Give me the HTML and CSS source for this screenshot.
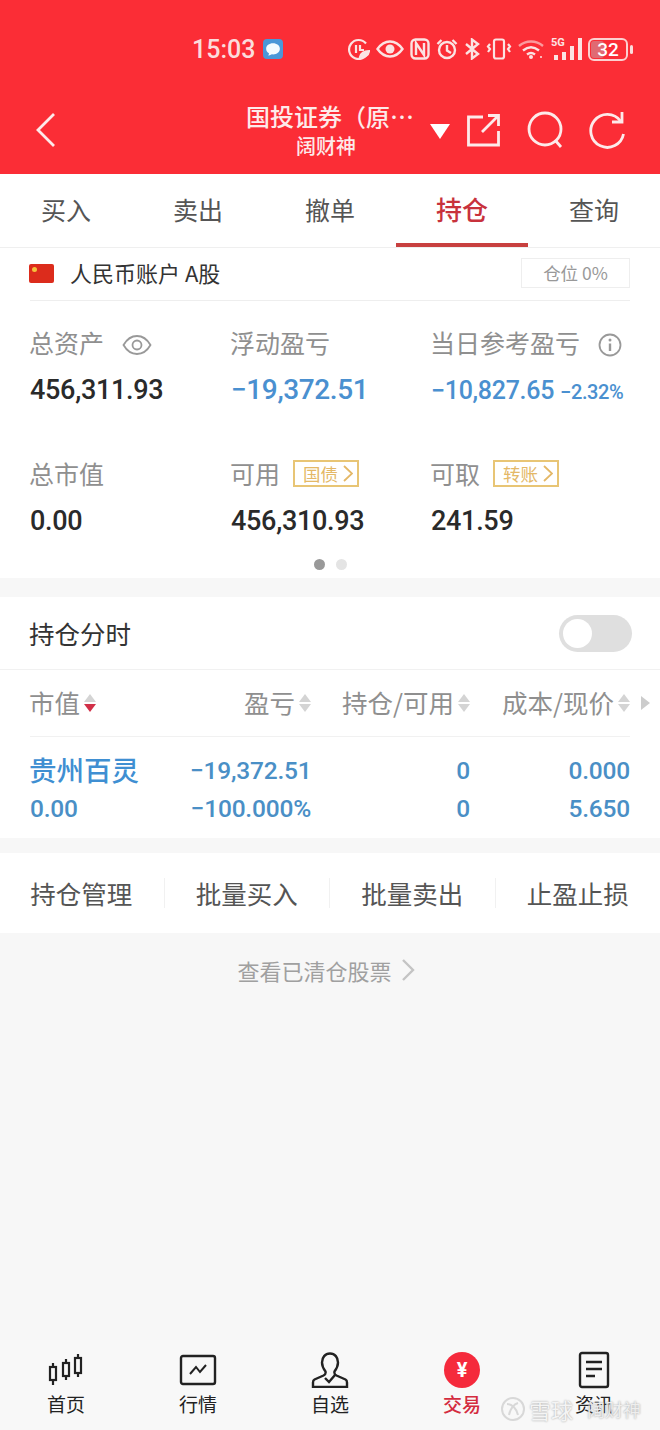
FILE: index.html
```html
<!doctype html>
<html>

<head>
  <meta charset="UTF-8" />
  <meta name="viewport" content="width=device-width, initial-scale=1.0" />
  <title>持仓</title>
  <link rel="stylesheet" href="styles.css">
</head>

<body>
  <div class="app">
    <header class="top">
      <div class="status">
        <span class="clock">15:03</span>
        <span class="msg"><svg width="16" height="15" viewBox="0 0 14 13"><path d="M7 1C3.600 1 1 3 1 5.800c0 1.700 1 3.100 2.500 4L3 12l3-1.300c.3 0 .7.100 1 .100 3.400 0 6-2.200 6-5S10.400 1 7 1z" fill="#f4fbff"/></svg></span>
        <span class="status-icons">
          <svg width="22" height="22" viewBox="0 0 22 22" fill="none" stroke="#fbe3e3" stroke-width="2.200"><path d="M18 5.500A9.500 9.500 0 1 0 20 13"/><path d="M8 7v8M12 7v5h4"/><path d="M12 19c1-4 4-6 9-6-.5 4-4 6-9 6z" fill="#fbe3e3"/></svg>
          <svg width="28" height="20" viewBox="0 0 28 20" fill="none" stroke="#fbe3e3" stroke-width="2.400"><path d="M1.500 10C5 5 9 2.500 14 2.500S23 5 26.500 10C23 15 19 17.500 14 17.500S5 15 1.500 10z"/><circle cx="14" cy="10" r="4.500" fill="#fbe3e3" stroke="none"/></svg>
          <svg width="20" height="22" viewBox="0 0 20 22" fill="none" stroke="#fbe3e3" stroke-width="2.400"><rect x="1.500" y="1.500" width="17" height="19" rx="4"/><path d="M6 17V5l8 12V5"/></svg>
          <svg width="22" height="22" viewBox="0 0 22 22" fill="none" stroke="#fbe3e3" stroke-width="2.400"><circle cx="11" cy="12" r="8"/><path d="M11 7v5.500l4 2.500M1.500 6l4-4M20.500 6l-4-4"/></svg>
          <svg width="16" height="22" viewBox="0 0 16 22" fill="none" stroke="#fbe3e3" stroke-width="2.400"><path d="M2 6l12 10-6 4.500v-19L14 6 2 16"/></svg>
          <svg width="26" height="22" viewBox="0 0 26 22" fill="none" stroke="#fbe3e3" stroke-width="2.200"><rect x="8" y="1.500" width="10" height="19" rx="2"/><path d="M4 6l-2 2.500L4 11l-2 3M22 6l2 2.500L22 11l2 3"/></svg>
          <svg width="27" height="20" viewBox="0 0 27 20" fill="none" stroke="#fbe3e3" stroke-width="2.400"><path d="M1 7c7-6 17-6 24 0" opacity=".6"/><path d="M5 11.500c5-4 11-4 16 0M9 15.500c2.500-1.800 5.500-1.800 8 0"/><circle cx="13" cy="18" r="2" fill="#fbe3e3" stroke="none"/><circle cx="23" cy="18" r="1" fill="#fbe3e3" stroke="none"/></svg>
          <span class="signal"><b>5G</b><i class="s1"></i><i class="s2"></i><i class="s3"></i><i class="s4"></i></span>
          <span class="battery"><span class="batt-level"></span><span class="batt-num">32</span></span>
        </span>
      </div>
      <div class="nav">
        <svg class="back" width="24" height="36" viewBox="0 0 24 36" fill="none" stroke="#fdeaea" stroke-width="2.800"><path d="M20 2L4 18l16 16"/></svg>
        <div class="title">
          <div class="title-main">国投证券（原…</div>
          <div class="title-sub">阔财神</div>
        </div>
        <span class="caret"></span>
        <svg class="nav-icon share" width="36" height="36" viewBox="0 0 36 36" fill="none" stroke="#fdeaea" stroke-width="2.800"><path d="M18 5H3.500v28h30V19M17 20L33 4M23 3.500h10.500V14" /></svg>
        <svg class="nav-icon search" width="38" height="38" viewBox="0 0 38 38" fill="none" stroke="#fdeaea" stroke-width="2.800"><circle cx="19" cy="18" r="16"/><path d="M29 29l6 7"/></svg>
        <svg class="nav-icon refresh" width="38" height="38" viewBox="0 0 38 38" fill="none" stroke="#fdeaea" stroke-width="2.800"><path d="M33.500 10A16.500 16.500 0 1 0 36.500 23"/><path d="M35 1v10H25"/></svg>
      </div>
    </header>

    <nav class="tabs">
      <div class="tab">买入</div>
      <div class="tab">卖出</div>
      <div class="tab">撤单</div>
      <div class="tab active">持仓</div>
      <div class="tab">查询</div>
    </nav>

    <section class="assets">
      <div class="account">
        <span class="flag"><i></i></span>
        <span class="account-name">人民币账户 A股</span>
        <span class="ratio">仓位 0%</span>
      </div>
      <div class="summary">
        <div class="cell">
          <div class="label">总资产
            <svg class="eye" width="30" height="22" viewBox="0 0 30 22" fill="none" stroke="#999" stroke-width="1.800"><path d="M1.500 11C5 5 9.500 2 15 2s10 3 13.500 9C25 17 20.500 20 15 20S5 17 1.500 11z"/><circle cx="15" cy="11" r="4.500"/></svg>
          </div>
          <div class="value">456,311.93</div>
        </div>
        <div class="cell">
          <div class="label">浮动盈亏</div>
          <div class="value blue">−19,372.51</div>
        </div>
        <div class="cell">
          <div class="label">当日参考盈亏
            <svg class="info" width="24" height="24" viewBox="0 0 24 24" fill="none" stroke="#999" stroke-width="1.800"><circle cx="12" cy="12" r="10.500"/><path d="M12 10.500V18" stroke-width="2.400"/><circle cx="12" cy="7" r="1.500" fill="#999" stroke="none"/></svg>
          </div>
          <div class="value blue day"><span>−10,827.65</span><small>−2.32%</small></div>
        </div>
        <div class="cell">
          <div class="label">总市值</div>
          <div class="value">0.00</div>
        </div>
        <div class="cell">
          <div class="label">可用 <span class="tag">国债<svg width="10" height="17" viewBox="0 0 10 17" fill="none" stroke="#e4b867" stroke-width="1.800"><path d="M1 1l8 7.500L1 16"/></svg></span></div>
          <div class="value">456,310.93</div>
        </div>
        <div class="cell">
          <div class="label">可取 <span class="tag">转账<svg width="10" height="17" viewBox="0 0 10 17" fill="none" stroke="#e4b867" stroke-width="1.800"><path d="M1 1l8 7.500L1 16"/></svg></span></div>
          <div class="value">241.59</div>
        </div>
      </div>
      <div class="dots"><i class="on"></i><i></i></div>
    </section>

    <section class="holdings">
      <div class="switch-row">
        <span class="switch-label">持仓分时</span>
        <span class="switch"><i></i></span>
      </div>
      <div class="table">
        <div class="thead">
          <div class="th col-1">市值<span class="sort sorted"><i class="up"></i><i class="down"></i></span></div>
          <div class="th col-2">盈亏<span class="sort"><i class="up"></i><i class="down"></i></span></div>
          <div class="th col-3">持仓/可用<span class="sort"><i class="up"></i><i class="down"></i></span></div>
          <div class="th col-4">成本/现价<span class="sort"><i class="up"></i><i class="down"></i></span></div>
        </div>
        <span class="more"></span>
        <div class="trow">
          <div class="td col-1 name">贵州百灵</div>
          <div class="td col-2">−19,372.51</div>
          <div class="td col-3">0</div>
          <div class="td col-4">0.000</div>
        </div>
        <div class="trow second">
          <div class="td col-1">0.00</div>
          <div class="td col-2">−100.000%</div>
          <div class="td col-3">0</div>
          <div class="td col-4">5.650</div>
        </div>
      </div>
    </section>

    <section class="actions">
      <div class="action">持仓管理</div>
      <div class="action">批量买入</div>
      <div class="action">批量卖出</div>
      <div class="action">止盈止损</div>
    </section>

    <div class="cleared">查看已清仓股票
      <svg width="14" height="22" viewBox="0 0 14 22" fill="none" stroke="#c4c4c4" stroke-width="2.400"><path d="M2 1l10 10L2 21"/></svg>
    </div>

    <footer class="bottom">
      <div class="bottom-item">
        <div class="icon-box"><svg width="36" height="32" viewBox="0 0 36 32" fill="none" stroke="#222" stroke-width="2.200"><path d="M5 9v22M18 5v21M30 0v23"/><rect x="2" y="13" width="6" height="13" fill="#f8f8f8"/><rect x="15" y="9" width="6" height="13" fill="#f8f8f8"/><rect x="27" y="4" width="6" height="15" fill="#f8f8f8"/></svg></div>
        <span>首页</span>
      </div>
      <div class="bottom-item">
        <div class="icon-box"><svg width="38" height="32" viewBox="0 0 38 32" fill="none" stroke="#222" stroke-width="2.400"><rect x="2" y="2" width="34" height="28" rx="2"/><path d="M11 20l6-7 4 5 6-7" stroke-width="2"/></svg></div>
        <span>行情</span>
      </div>
      <div class="bottom-item">
        <div class="icon-box"><svg width="38" height="36" viewBox="0 0 38 36" fill="none" stroke="#222" stroke-width="2.400"><path d="M19 1.500c-5 0-8 4-8 9 0 4 2 7 3.500 9 .5 2 0 3-2 4l-9 4c-1 .5-1.500 1.500-1.500 3V35h34v-4.500c0-1.500-.5-2.500-1.500-3l-9-4c-2-1-2.500-2-2-4 1.500-2 3.500-5 3.500-9 0-5-3-9-8-9z"/><path d="M14 26l4 4 6-7"/></svg></div>
        <span>自选</span>
      </div>
      <div class="bottom-item current">
        <div class="icon-box"><span class="yuan">¥</span></div>
        <span>交易</span>
      </div>
      <div class="bottom-item">
        <div class="icon-box"><svg width="32" height="38" viewBox="0 0 32 38" fill="none" stroke="#222" stroke-width="2.400"><rect x="2" y="2" width="28" height="34" rx="2"/><path d="M8 11h16M8 18h16M8 25h9"/></svg></div>
        <span>资讯</span>
      </div>
    </footer>

    <div class="watermark">
      <svg width="26" height="26" viewBox="0 0 26 26" fill="none" stroke="#d8d8d8" stroke-width="2"><circle cx="13" cy="13" r="11"/><path d="M7 8c5 0 10 5 11 11M18 7c-4 1-8 6-9 12"/></svg>
      <span class="wm-a">雪球</span><span class="wm-b">阔财神</span>
    </div>
  </div>
</body>

</html>
```

FILE: styles.css
```css
* {
  box-sizing: border-box;
}

body {
  margin: 0;
  font-family: "Noto Sans CJK SC", "Roboto", sans-serif;
}

.app {
  position: relative;
  width: 660px;
  height: 1430px;
  background-color: #f7f7f7;
  display: flex;
  flex-direction: column;
  overflow: hidden;
}

.top {
  height: 174px;
  background-color: #fb2d36;
  color: #fdeaea;
}

.status {
  height: 88px;
  padding: 10px 0 0 192px;
  display: flex;
  align-items: center;
}

.clock {
  font-family: "Roboto", sans-serif;
  font-size: 25px;
  font-weight: 500;
  color: #fbdcdc;
  width: 71px;
  flex: none;
}

.msg {
  width: 20px;
  height: 20px;
  flex: none;
  border-radius: 4px;
  background-color: #4b97d8;
  display: flex;
  align-items: center;
  justify-content: center;
}

.status-icons {
  margin-left: 65px;
  display: flex;
  align-items: center;
  gap: 6px;
}

.status-icons svg {
  flex: none;
}

.signal {
  position: relative;
  flex: none;
  width: 31px;
  height: 24px;
}

.signal b {
  position: absolute;
  left: 0;
  top: -1px;
  font: bold 11px "Roboto", sans-serif;
  color: #fbe3e3;
}

.signal i {
  position: absolute;
  bottom: 1px;
  width: 4px;
  background-color: #fbe3e3;
}

.s1 { left: 3px; height: 5px; }
.s2 { left: 11px; height: 8px; }
.s3 { left: 19px; height: 14px; }
.s4 { left: 27px; height: 22px; }

.battery {
  position: relative;
  flex: none;
  width: 40px;
  height: 23px;
  border: 2px solid #fbd0d0;
  border-radius: 6px;
}

.battery::after {
  content: "";
  position: absolute;
  right: -7px;
  top: 5px;
  width: 3px;
  height: 9px;
  border-radius: 2px;
  background-color: #fbdcdc;
}

.batt-level {
  position: absolute;
  left: 1px;
  top: 1px;
  bottom: 1px;
  width: 13px;
  border-radius: 3px;
  background-color: #e06a72;
}

.batt-num {
  position: absolute;
  inset: 0;
  text-align: center;
  font: 500 19px/19px "Roboto", sans-serif;
  color: #fff;
}

.nav {
  position: relative;
  height: 86px;
  padding-left: 34px;
  display: flex;
  align-items: center;
}

.back {
  margin-top: -2px;
}

.title {
  width: 186px;
  margin-top: -3px;
  margin-left: 188px;
}

.title-main {
  font-size: 24px;
  font-weight: 500;
  line-height: 31px;
  white-space: nowrap;
}

.title-sub {
  font-size: 20px;
  font-weight: 500;
  line-height: 29px;
  padding-left: 50px;
}

.caret {
  width: 0;
  height: 0;
  margin-left: -2px;
  border-left: 10px solid transparent;
  border-right: 10px solid transparent;
  border-top: 15px solid #fff;
}

.nav-icon {
  flex: none;
  margin-top: -2px;
}

.share {
  margin-left: 15px;
}

.search {
  margin-left: 25px;
}

.refresh {
  margin-left: 23px;
}

.tabs {
  height: 74px;
  display: flex;
  background-color: #fff;
  border-bottom: 1px solid #efefef;
}

.tab {
  width: 132px;
  text-align: center;
  font-size: 25px;
  line-height: 70px;
  color: #555;
}

.tab.active {
  color: #c8323c;
  font-size: 26px;
  font-weight: 500;
  border-bottom: 4px solid #c8403f;
}

.assets {
  height: 330px;
  background-color: #fff;
  padding: 0 30px;
}

.account {
  height: 53px;
  display: flex;
  align-items: center;
  border-bottom: 1px solid #eee;
}

.flag {
  width: 25px;
  height: 19px;
  border-radius: 2px;
  background-color: #dc2c1c;
  padding: 3px 0 0 3px;
  margin: -2px 0 0 -1px;
}

.flag i {
  display: block;
  width: 5px;
  height: 5px;
  background-color: #f5c13b;
  border-radius: 50%;
}

.account-name {
  margin-top: -4px;
  margin-left: 16px;
  font-size: 22px;
  color: #333;
  flex: auto;
}

.ratio {
  width: 109px;
  height: 30px;
  border: 1px solid #eee;
  text-align: center;
  font-size: 17.500px;
  line-height: 28px;
  color: #999;
  margin-top: -2px;
}

.summary {
  display: grid;
  grid-template-columns: 201px 200px 199px;
  grid-template-rows: 131px 100px;
  padding-top: 22px;
}

.label {
  height: 38px;
  margin-left: -1px;
  font-size: 25px;
  line-height: 38px;
  color: #8f8f8f;
  display: flex;
  align-items: center;
  white-space: nowrap;
}

.eye {
  margin-top: 5px;
  margin-left: 18px;
}

.info {
  margin-top: 5px;
  margin-left: 18px;
}

.value {
  margin-top: 11px;
  font-family: "Roboto", sans-serif;
  font-size: 27px;
  font-weight: 500;
  letter-spacing: -.3px;
  line-height: 36px;
  color: #2a2a2a;
  white-space: nowrap;
}

.blue {
  color: #4a90d0;
  font-size: 28px;
  letter-spacing: -.4px;
}

.day span {
  font-size: 25px;
  letter-spacing: -.3px;
}

.day small {
  margin-left: 6px;
  font-size: 20px;
  letter-spacing: -.4px;
}

.tag {
  display: inline-flex;
  align-items: center;
  justify-content: space-between;
  width: 66px;
  height: 27px;
  margin-left: 13px;
  padding: 0 4px 0 8px;
  border: 2px solid #e8c575;
  font-size: 17.500px;
  line-height: 23px;
  color: #e4b867;
}

.dots {
  display: flex;
  justify-content: center;
  gap: 11px;
  margin-top: 5px;
}

.dots i {
  width: 11px;
  height: 11px;
  border-radius: 50%;
  background-color: #e4e4e4;
}

.dots i.on {
  background-color: #999;
}

.holdings {
  height: 241px;
  margin-top: 19px;
  background-color: #fff;
}

.switch-row {
  height: 73px;
  padding: 0 28px 0 29px;
  display: flex;
  align-items: center;
  justify-content: space-between;
  color: #333;
  border-bottom: 1px solid #f1f1f1;
}

.switch-label {
  margin-top: -2px;
  font-size: 25.500px;
}

.switch {
  width: 73px;
  height: 37px;
  border-radius: 19px;
  background-color: #dfdfdf;
  padding: 4px;
}

.switch i {
  display: block;
  width: 29px;
  height: 29px;
  border-radius: 50%;
  background-color: #fff;
}

.table {
  position: relative;
  margin: 0 30px;
}

.thead {
  height: 67px;
  padding-bottom: 3px;
  display: flex;
  align-items: center;
  border-bottom: 1px solid #f1f1f1;
}

.more {
  position: absolute;
  left: 611px;
  top: 26px;
  border-left: 9px solid #ccc;
  border-top: 7px solid transparent;
  border-bottom: 7px solid transparent;
}

.th {
  font-size: 25.500px;
  color: #8f8f8f;
  display: flex;
  align-items: center;
  white-space: nowrap;
}

.col-1 {
  width: 160px;
}

.col-2 {
  width: 121px;
  margin-right: 1px;
  justify-content: flex-end;
  text-align: right;
}

.col-3 {
  width: 158px;
  justify-content: flex-end;
  text-align: right;
}

.col-4 {
  width: 160px;
  justify-content: flex-end;
  text-align: right;
}

.th.col-1 {
  margin-left: -1px;
  margin-right: 1px;
}

.sort {
  display: flex;
  flex-direction: column;
  gap: 2px;
  margin-top: 3px;
  margin-left: 4px;
}

.sort i {
  width: 0;
  height: 0;
  border-left: 6.500px solid transparent;
  border-right: 6.500px solid transparent;
}

.sort .up {
  border-bottom: 8px solid #d4d4d4;
}

.sort .down {
  border-top: 8px solid #d4d4d4;
}

.sorted .down {
  border-top-color: #d13048;
}

.trow {
  display: flex;
  align-items: center;
  height: 40px;
  margin-top: 13px;
  font-family: "Roboto", sans-serif;
  font-size: 24.500px;
  font-weight: 500;
  letter-spacing: -.2px;
  color: #4a8fc6;
}

.trow.second {
  height: 36px;
  margin-top: 0;
}

.name {
  font-family: "Noto Sans CJK SC", sans-serif;
  font-size: 27.500px;
  font-weight: 500;
  letter-spacing: 0;
  line-height: 36px;
  margin-top: -3px;
  margin-left: -1px;
  margin-right: 1px;
  color: #3f8fd2;
}

.actions {
  height: 80px;
  margin-top: 15px;
  background-color: #fff;
  display: flex;
  align-items: center;
  margin-left: -1px;
}

.action {
  flex: 1;
  text-align: center;
  font-size: 25.500px;
  line-height: 30px;
  color: #555;
  border-left: 1px solid #f1f1f1;
  white-space: nowrap;
}

.action:first-child {
  border-left: 0;
}

.cleared {
  margin-top: 20px;
  display: flex;
  align-items: center;
  justify-content: center;
  gap: 9px;
  font-size: 22px;
  line-height: 34px;
  color: #a0a0a0;
  padding-right: 8px;
}

.bottom {
  margin-top: auto;
  height: 90px;
  background-color: #f8f8f8;
  display: flex;
  padding-top: 8px;
}

.bottom-item {
  width: 132px;
  height: 69px;
  display: flex;
  flex-direction: column;
  align-items: center;
  justify-content: flex-end;
  gap: 2px;
  font-size: 19px;
  line-height: 26px;
  color: #222;
}

.icon-box {
  height: 38px;
  display: flex;
  align-items: center;
}

.bottom-item.current {
  color: #d42c3f;
  font-weight: 500;
}

.yuan {
  width: 36px;
  height: 36px;
  border-radius: 50%;
  background-color: #f52a3c;
  color: #fff;
  text-align: center;
  font: bold 20px/36px "Roboto", sans-serif;
}

.watermark {
  position: absolute;
  left: 500px;
  top: 1396px;
  display: flex;
  align-items: center;
  gap: 3px;
  color: #f4f4f4;
  font-size: 22px;
  line-height: 26px;
  text-shadow: 0 0 2px #9a9a9a;
}

.wm-b {
  margin-left: 11px;
  color: #eee;
  font-size: 18px;
}
```
